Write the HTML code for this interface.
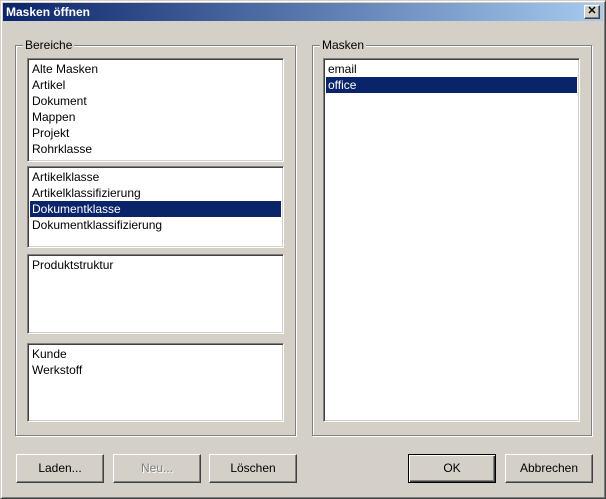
<!DOCTYPE html>
<html><head><meta charset="utf-8"><style>
*{margin:0;padding:0;box-sizing:border-box}
body{width:606px;height:499px;background:#d4d0c8;font-family:Tahoma,"Liberation Sans",sans-serif;font-size:12px;color:#000;position:relative;overflow:hidden}
.win{position:absolute;left:0;top:0;width:606px;height:499px;border:1px solid;border-color:#d4d0c8 #404040 #404040 #d4d0c8;box-shadow:inset 1px 1px #fff,inset -1px -1px #808080}
.title{position:absolute;left:3px;top:3px;width:600px;height:18px;background:linear-gradient(90deg,#0a246a,#a6caf0);color:#fff;font-weight:bold;font-size:12px;line-height:18px;padding-left:3px}
.x{position:absolute;right:3px;top:2px;width:16px;height:14px;background:#d4d0c8;border:1px solid;border-color:#fff #404040 #404040 #fff;box-shadow:inset -1px -1px #808080;color:#000;font-size:11px;line-height:11px;text-align:center;font-weight:bold}
.grp{position:absolute;border:1px solid #808080;box-shadow:1px 1px #fff,inset 1px 1px #fff}
.lbl{position:absolute;top:-8px;left:7px;background:#d4d0c8;padding:0 2px;line-height:14px}
.lb{position:absolute;background:#fff;border:1px solid;border-color:#808080 #fff #fff #808080;box-shadow:inset 1px 1px #404040,inset -1px -1px #d4d0c8;padding:2px}
.lb div{height:16px;line-height:16px;padding-left:2px;white-space:nowrap}
.sel{background:#0a246a;color:#fff}
.btn{position:absolute;top:454px;height:29px;width:88px;border:1px solid;border-color:#fff #404040 #404040 #fff;box-shadow:inset -1px -1px #808080;text-align:center;line-height:26px}
.def{border:1px solid #000;box-shadow:inset 1px 1px #fff,inset -1px -1px #404040,inset -2px -2px #808080}
.dis{color:#808080;text-shadow:1px 1px #fff}
</style></head><body>
<div class="win"></div>
<div class="title">Masken öffnen<div class="x">✕</div></div>
<div class="grp" style="left:15px;top:45px;width:281px;height:391px"><span class="lbl">Bereiche</span></div>
<div class="lb" style="left:27px;top:58px;width:257px;height:104px"><div>Alte Masken</div><div>Artikel</div><div>Dokument</div><div>Mappen</div><div>Projekt</div><div>Rohrklasse</div></div>
<div class="lb" style="left:27px;top:166px;width:257px;height:82px"><div>Artikelklasse</div><div>Artikelklassifizierung</div><div class="sel">Dokumentklasse</div><div>Dokumentklassifizierung</div></div>
<div class="lb" style="left:27px;top:254px;width:257px;height:80px"><div>Produktstruktur</div></div>
<div class="lb" style="left:27px;top:343px;width:257px;height:79px"><div>Kunde</div><div>Werkstoff</div></div>
<div class="grp" style="left:312px;top:45px;width:280px;height:391px"><span class="lbl">Masken</span></div>
<div class="lb" style="left:323px;top:58px;width:257px;height:364px"><div>email</div><div class="sel">office</div></div>
<div class="btn" style="left:16px">Laden...</div>
<div class="btn dis" style="left:113px">Neu...</div>
<div class="btn" style="left:209px">Löschen</div>
<div class="btn def" style="left:408px">OK</div>
<div class="btn" style="left:505px">Abbrechen</div>
</body></html>
